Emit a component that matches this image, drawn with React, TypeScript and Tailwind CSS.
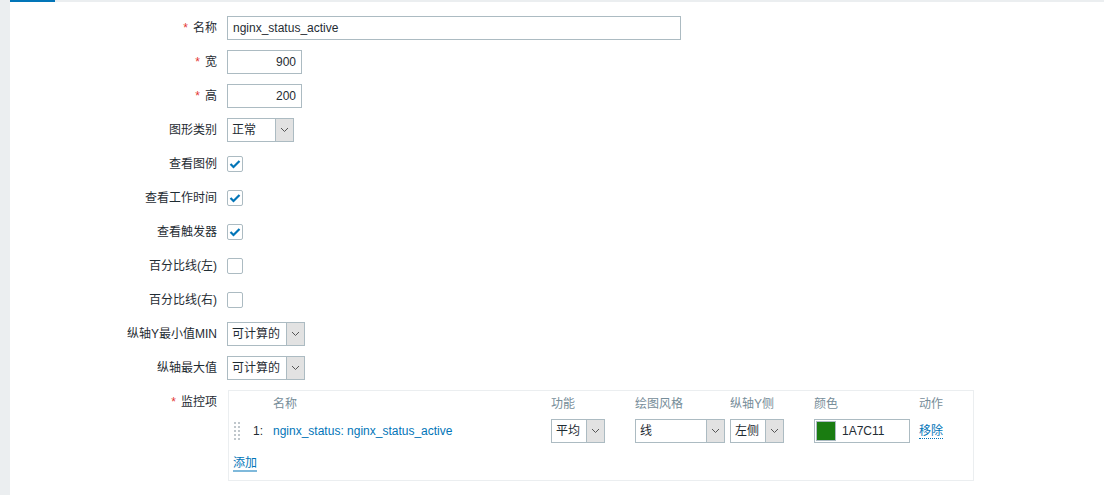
const font = { fontFamily: '"Liberation Sans", Arial, "Noto Sans CJK SC", sans-serif' };

function Chevron() {
  return (
    <svg width="9" height="6" viewBox="0 0 9 6" fill="none">
      <path d="M1 1l3.5 3.5L8 1" stroke="#555" strokeWidth="1" />
    </svg>
  );
}

function Select({ value, width }: { value: string; width: string }) {
  return (
    <div className={`flex h-6 border border-[#acbbc2] bg-white ${width}`}>
      <span className="flex-1 pl-[4px] leading-[23px] text-[#1f2c33] whitespace-nowrap overflow-hidden">
        {value}
      </span>
      <span className="w-[18px] flex items-center justify-center bg-[#e2e2e2] border-l border-[#acbbc2]">
        <Chevron />
      </span>
    </div>
  );
}

function Checkbox({ checked }: { checked?: boolean }) {
  return (
    <div className="w-4 h-4 border border-[#acbbc2] rounded-[2px] bg-white flex items-center justify-center">
      {checked && (
        <svg width="12" height="10" viewBox="0 0 12 10" fill="none">
          <path d="M1.5 5l3 3 6-6" stroke="#0275b8" strokeWidth="2.2" />
        </svg>
      )}
    </div>
  );
}

function Label({ text, required }: { text: string; required?: boolean }) {
  return (
    <div className="text-right text-[#1f2c33] leading-6 whitespace-nowrap">
      {required && <span className="text-[#e33734] mr-[5px]">*</span>}
      {text}
    </div>
  );
}

function Row({ label, required, children }: { label: string; required?: boolean; children: React.ReactNode }) {
  return (
    <div className="grid grid-cols-[207px_1fr] gap-x-[10px] items-center">
      <Label text={label} required={required} />
      <div className="flex items-center h-6">{children}</div>
    </div>
  );
}

export default function App() {
  return (
    <div className="flex min-h-screen bg-white text-[12px]" style={font}>
      <div className="w-[10px] bg-[#ebeef0]" />
      <div className="flex-1">
        <div className="flex h-[2px]">
          <div className="w-[45px] bg-[#0275b8]" />
          <div className="flex-1 bg-[#ebeef0]" />
        </div>
        <div className="flex flex-col gap-[10px] pt-[14px]">
          <Row label="名称" required>
            <div className="w-[454px] h-6 border border-[#acbbc2] pl-[5px] leading-[22px] text-[#1f2c33]">
              nginx_status_active
            </div>
          </Row>
          <Row label="宽" required>
            <div className="w-[75px] h-6 border border-[#acbbc2] pr-[5px] text-right leading-[22px] text-[#1f2c33]">
              900
            </div>
          </Row>
          <Row label="高" required>
            <div className="w-[75px] h-6 border border-[#acbbc2] pr-[5px] text-right leading-[22px] text-[#1f2c33]">
              200
            </div>
          </Row>
          <Row label="图形类别">
            <Select value="正常" width="w-[67px]" />
          </Row>
          <Row label="查看图例">
            <Checkbox checked />
          </Row>
          <Row label="查看工作时间">
            <Checkbox checked />
          </Row>
          <Row label="查看触发器">
            <Checkbox checked />
          </Row>
          <Row label="百分比线(左)">
            <Checkbox />
          </Row>
          <Row label="百分比线(右)">
            <Checkbox />
          </Row>
          <Row label="纵轴Y最小值MIN">
            <Select value="可计算的" width="w-[78px]" />
          </Row>
          <Row label="纵轴最大值">
            <Select value="可计算的" width="w-[78px]" />
          </Row>

          <div className="grid grid-cols-[207px_1fr] gap-x-[11px] items-start">
            <div>
              <Label text="监控项" required />
            </div>
            <div className="w-[746px] border border-[#ebeef0] pl-[4px] pt-[5px] pb-[9px]">
              <div className="grid grid-cols-[20px_20px_278px_84px_95px_84px_105px_1fr] text-[#768d99] leading-4">
                <div />
                <div />
                <div>名称</div>
                <div>功能</div>
                <div>绘图风格</div>
                <div>纵轴Y侧</div>
                <div>颜色</div>
                <div>动作</div>
              </div>
              <div className="grid grid-cols-[20px_20px_278px_84px_95px_84px_105px_1fr] items-center mt-[7px] h-6">
                <div className="flex gap-[2px] pl-[1px]">
                  <div className="flex flex-col gap-[2px]">
                    {[0, 1, 2, 3, 4].map((i) => (
                      <span key={i} className="w-[2px] h-[2px] bg-[#c0c7cc]" />
                    ))}
                  </div>
                  <div className="flex flex-col gap-[2px]">
                    {[0, 1, 2, 3, 4].map((i) => (
                      <span key={i} className="w-[2px] h-[2px] bg-[#c0c7cc]" />
                    ))}
                  </div>
                </div>
                <div className="text-[#1f2c33]">1:</div>
                <div className="text-[#0275b8]">nginx_status: nginx_status_active</div>
                <div>
                  <Select value="平均" width="w-[54px]" />
                </div>
                <div>
                  <Select value="线" width="w-[90px]" />
                </div>
                <div>
                  <Select value="左侧" width="w-[54px]" />
                </div>
                <div>
                  <div className="flex items-center w-[96px] h-6 border border-[#acbbc2]">
                    <span className="ml-[1px] w-[20px] h-[20px] bg-[#1a7c11] border border-[#acbbc2]" />
                    <span className="ml-[6px] text-[#1f2c33]">1A7C11</span>
                  </div>
                </div>
                <div>
                  <span className="text-[#0275b8] border-b border-dotted border-[#0275b8]">移除</span>
                </div>
              </div>
              <div className="mt-[12px] leading-4">
                <span className="text-[#0275b8] border-b-2 border-[#7fb9db]">添加</span>
              </div>
            </div>
          </div>
        </div>
      </div>
    </div>
  );
}
